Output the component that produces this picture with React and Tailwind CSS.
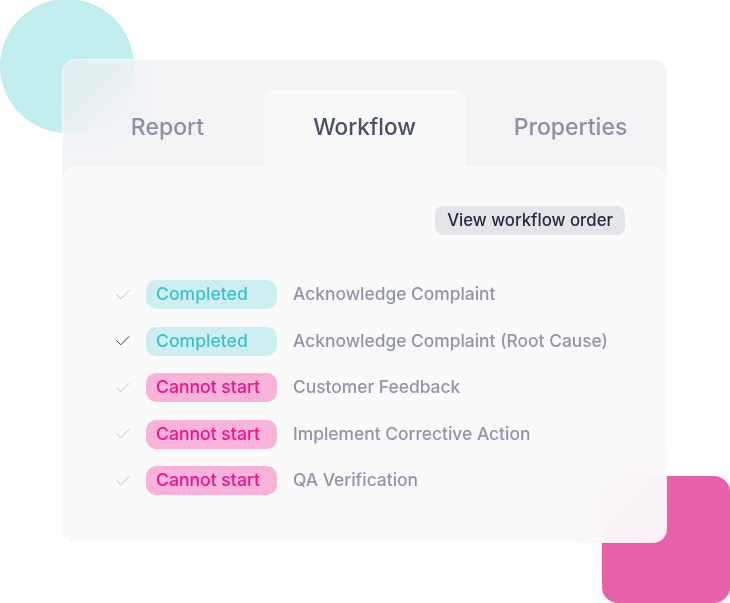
import { Check } from 'lucide-react'

const steps = [
  { status: 'done', label: 'Acknowledge Complaint', dark: false },
  { status: 'done', label: 'Acknowledge Complaint (Root Cause)', dark: true },
  { status: 'blocked', label: 'Customer Feedback', dark: false },
  { status: 'blocked', label: 'Implement Corrective Action', dark: false },
  { status: 'blocked', label: 'QA Verification', dark: false },
]

const StatusBadge = ({ status }) => {
  if (status === 'done') {
    return (
      <span className="flex items-center w-[131px] h-[29px] pl-[10px] rounded-[10px] bg-[#cdeff1] text-[#3dbfcd] text-[17.6px] font-medium">
        Completed
      </span>
    )
  }
  return (
    <span className="flex items-center w-[131px] h-[29px] pl-[10px] rounded-[10px] bg-[#f9b2da] text-[#f0128b] text-[17.6px] font-medium">
      Cannot start
    </span>
  )
}

const App = () => {
  return (
    <div
      className="relative w-[730px] h-[603px] overflow-hidden bg-white"
      style={{ fontFamily: 'Inter, "Noto Sans", sans-serif' }}
    >
      {/* decorative shapes behind the card */}
      <div className="absolute left-0 top-[-1px] w-[134px] h-[134px] rounded-full bg-[#c3eef0]" />
      <div className="absolute left-[602px] top-[476px] w-[128px] h-[127px] rounded-[16px] bg-[#e661aa]" />

      <div className="relative pl-[62px] pt-[59px]">
        <div className="w-[605px] h-[484px] rounded-[14px] overflow-hidden flex flex-col bg-[#eff0f2]/70 backdrop-blur-[32px] border border-white/50">
          {/* Tabs */}
          <div className="grid grid-cols-3 items-end h-[106px] shrink-0">
            <div className="h-[77px] flex items-start justify-center pt-[21px] pl-[8px] text-[23px] font-medium text-[#8c90a1]">
              Report
            </div>
            <div className="h-[77px] flex items-start justify-center pt-[21px] text-[22.5px] font-medium text-[#4a5068] bg-[#fbfbfb]/80 rounded-t-[12px]">
              Workflow
            </div>
            <div className="h-[77px] flex items-start justify-center pt-[21px] pl-[10px] text-[23px] font-medium text-[#8c90a1]">
              Properties
            </div>
          </div>

          {/* Body */}
          <div className="flex-1 rounded-t-[14px] bg-[#fbfbfb]/80 pt-[40px]">
            <div className="flex justify-end pr-[41px]">
              <button className="h-[29px] px-[12px] rounded-lg bg-[#e3e5e9] text-[16.8px] font-medium text-[#262b3c]">
                View workflow order
              </button>
            </div>

            <div className="mt-[45px] pl-[51px] flex flex-col gap-[17.5px]">
              {steps.map((step) => (
                <div key={step.label} className="flex items-center h-[29px]">
                  <span className="w-[32px] flex items-center">
                    <Check
                      size={18}
                      strokeWidth={1.3}
                      className={step.dark ? 'text-[#2b3046]' : 'text-[#bcc0c9]'}
                    />
                  </span>
                  <StatusBadge status={step.status} />
                  <span className="ml-[16px] text-[17.4px] font-medium text-[#9195a6]">
                    {step.label}
                  </span>
                </div>
              ))}
            </div>
          </div>
        </div>
      </div>
    </div>
  )
}

export default App
